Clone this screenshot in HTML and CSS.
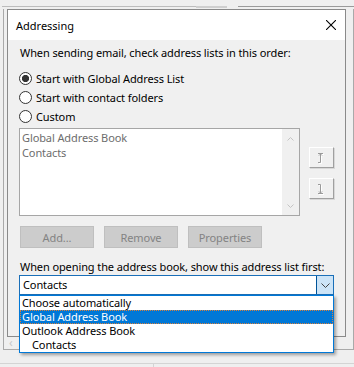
FILE: index.html
```html
<!DOCTYPE html>
<html lang="en">
<head>
  <meta charset="UTF-8" />
  <title>Addressing</title>
  <link rel="stylesheet" href="styles.css">
</head>
<body>
  <div class="strip">
    <span class="strip-left"></span>
    <span class="strip-tab"></span>
    <span class="strip-right"></span>
  </div>

  <div class="backwin">
    <div class="dialog">
      <div class="titlebar">
        <span class="title">Addressing</span>
        <svg class="close" width="10" height="10" viewBox="0 0 10 10">
          <path d="M0 0L10 10M10 0L0 10" stroke="#000" stroke-width="1.1" fill="none" />
        </svg>
      </div>

      <div class="content">
        <p class="label">When sending email, check address lists in this order:</p>

        <div class="radios">
          <div class="radio">
            <span class="circle checked"></span>
            <span>Start with Global Address List</span>
          </div>
          <div class="radio">
            <span class="circle"></span>
            <span>Start with contact folders</span>
          </div>
          <div class="radio">
            <span class="circle"></span>
            <span>Custom</span>
          </div>
        </div>

        <div class="listrow">
          <div class="listbox">
            <div class="items">
              <div>Global Address Book</div>
              <div>Contacts</div>
            </div>
            <div class="vscroll">
              <svg width="7" height="4" viewBox="0 0 7 4"><path d="M0.5 3.5L3.5 0.5L6.5 3.5" stroke="#c4c4c4" fill="none" /></svg>
              <svg width="7" height="4" viewBox="0 0 7 4"><path d="M0.5 0.5L3.5 3.5L6.5 0.5" stroke="#c4c4c4" fill="none" /></svg>
            </div>
          </div>

          <div class="movebtns">
            <div class="movebtn">
              <svg width="9" height="12" viewBox="0 0 9 12">
                <path d="M2 2.5H7M4.5 2.5V11.5M2 11.5H4.5M3 4.5L4.5 3L6 4.5" stroke="#fff" fill="none" />
                <path d="M1 1.5H6M3.5 1.5V10.5M1 10.5H3.5M2 3.5L3.5 2L5 3.5" stroke="#9a9a9a" fill="none" />
              </svg>
            </div>
            <div class="movebtn">
              <svg width="9" height="12" viewBox="0 0 9 12">
                <path d="M2 11.5H7M4.5 11.5V2.5M2 2.5H4.5M3 9.5L4.5 11L6 9.5" stroke="#fff" fill="none" />
                <path d="M1 10.5H6M3.5 10.5V1.5M1 1.5H3.5M2 8.5L3.5 10L5 8.5" stroke="#9a9a9a" fill="none" />
              </svg>
            </div>
          </div>
        </div>

        <div class="btnrow">
          <div class="btn">Add...</div>
          <div class="btn">Remove</div>
          <div class="btn">Properties</div>
        </div>

        <p class="label second">When opening the address book, show this address list first:</p>

        <div class="combo-wrap">
          <div class="combo">
            <span class="combo-value">Contacts</span>
            <span class="combo-drop">
              <svg width="9" height="5" viewBox="0 0 9 5"><path d="M0.5 0.5L4.5 4.5L8.5 0.5" stroke="#444" fill="none" /></svg>
            </span>
          </div>
          <ul class="droplist">
            <li>Choose automatically</li>
            <li class="selected">Global Address Book</li>
            <li>Outlook Address Book</li>
            <li class="sub">Contacts</li>
          </ul>
        </div>
      </div>
    </div>
    <span class="hscroll-arrow">&lsaquo;</span>
  </div>

  <div class="bottombar">
    <span class="bottom-left"></span>
  </div>
</body>
</html>
```

FILE: styles.css
```css
* {
  box-sizing: border-box;
  margin: 0;
  padding: 0;
}

body {
  width: 354px;
  height: 367px;
  overflow: hidden;
  background: #efefef;
  font-family: 'Noto Sans', 'Open Sans', sans-serif;
  font-size: 11px;
  letter-spacing: -0.1px;
  color: #000;
}

/* window behind the dialog */
.strip {
  height: 8px;
  display: flex;
  align-items: flex-end;
}

.strip-left {
  width: 194px;
  height: 2px;
  margin-left: 2px;
  border-top: 1px solid #bcbcbc;
}

.strip-tab {
  width: 31px;
  height: 2px;
  background: #cfcfcf;
}

.strip-right {
  flex: 1;
  height: 2px;
  margin-left: 11px;
  border-top: 1px solid #9a9a9a;
}

.backwin {
  position: relative;
  margin-left: 3px;
  width: 351px;
  height: 341px;
  border: 1px solid #a9a9a9;
  border-top: 0;
}

.hscroll-arrow {
  position: absolute;
  left: 5px;
  bottom: 0;
  color: #c8c8c8;
  font-size: 12px;
  line-height: 12px;
}

.bottombar {
  margin-top: 13px;
  height: 6px;
  border-top: 1px solid #d4d4d4;
}

.bottom-left {
  display: block;
  width: 154px;
  height: 100%;
  border-right: 1px solid #d4d4d4;
}

/* dialog */
.dialog {
  position: relative;
  z-index: 1;
  margin: 1px 0 0 3px;
  width: 339px;
  height: 328px;
  border: 1px solid #8a8a8a;
  background: #f0f0f0;
}

.titlebar {
  height: 30px;
  background: #fff;
  display: flex;
  align-items: center;
  justify-content: space-between;
  padding: 0 9px 0 8px;
}

.title {
  font-size: 11px;
  letter-spacing: 0;
  color: #000;
}

.close {
  display: block;
}

.content {
  padding: 5px 0 0 11px;
}

.label {
  margin-left: 1px;
  line-height: 15px;
  white-space: nowrap;
}

.radios {
  margin-top: 9px;
}

.radio {
  height: 19px;
  display: flex;
  align-items: center;
  gap: 4px;
}

.circle {
  width: 13px;
  height: 13px;
  border: 1px solid #333;
  border-radius: 50%;
  background: #fff;
}

.circle.checked {
  background: radial-gradient(circle, #333 0 3.3px, #fff 3.9px);
}

/* address list */
.listrow {
  display: flex;
  align-items: flex-start;
  margin-top: 2px;
}

.listbox {
  width: 281px;
  height: 88px;
  border: 1px solid #a6a6a6;
  background: #fff;
  display: flex;
}

.items {
  flex: 1;
  padding: 1px 0 0 2px;
  color: #6d6d6d;
  line-height: 15px;
}

.vscroll {
  width: 17px;
  background: #f0f0f0;
  display: flex;
  flex-direction: column;
  justify-content: space-between;
  align-items: center;
  padding: 8px 0 7px;
}

.vscroll svg {
  display: block;
}

.movebtns {
  margin: 19px 0 0 9px;
  display: flex;
  flex-direction: column;
  gap: 10px;
}

.movebtn {
  width: 25px;
  height: 21px;
  background: #f0f0f0;
  border-top: 1px solid #fff;
  border-left: 1px solid #fff;
  border-right: 1px solid #a0a0a0;
  border-bottom: 1px solid #a0a0a0;
  box-shadow: 1px 1px 0 #d8d8d8;
  display: flex;
  align-items: center;
  justify-content: center;
}

/* disabled buttons */
.btnrow {
  display: flex;
  gap: 10px;
  margin: 10px 0 0 1px;
}

.btn {
  width: 74px;
  height: 22px;
  background: #cccccc;
  border: 1px solid #bfbfbf;
  color: #838383;
  display: flex;
  align-items: center;
  justify-content: center;
}

.label.second {
  margin-top: 11px;
}

/* combo box */
.combo-wrap {
  position: relative;
  width: 315px;
  margin-top: 1px;
}

.combo {
  height: 20px;
  border: 1px solid #1a6fb8;
  background: #fff;
  display: flex;
}

.combo-value {
  flex: 1;
  padding-left: 3px;
  line-height: 18px;
}

.combo-drop {
  width: 17px;
  background: #cce4f7;
  border-left: 1px solid #005499;
  display: flex;
  align-items: center;
  justify-content: center;
}

.droplist {
  position: absolute;
  top: 100%;
  left: 0;
  width: 315px;
  list-style: none;
  background: #fff;
  border: 1px solid #0078d7;
  box-shadow: 2px 2px 3px rgba(0, 0, 0, 0.35);
}

.droplist li {
  height: 14px;
  line-height: 14px;
  padding-left: 2px;
}

.droplist li.selected {
  background: #0078d7;
  color: #fff;
  outline: 1px dotted #d9803a;
  outline-offset: -1px;
}

.droplist li.sub {
  padding-left: 12px;
}
```
